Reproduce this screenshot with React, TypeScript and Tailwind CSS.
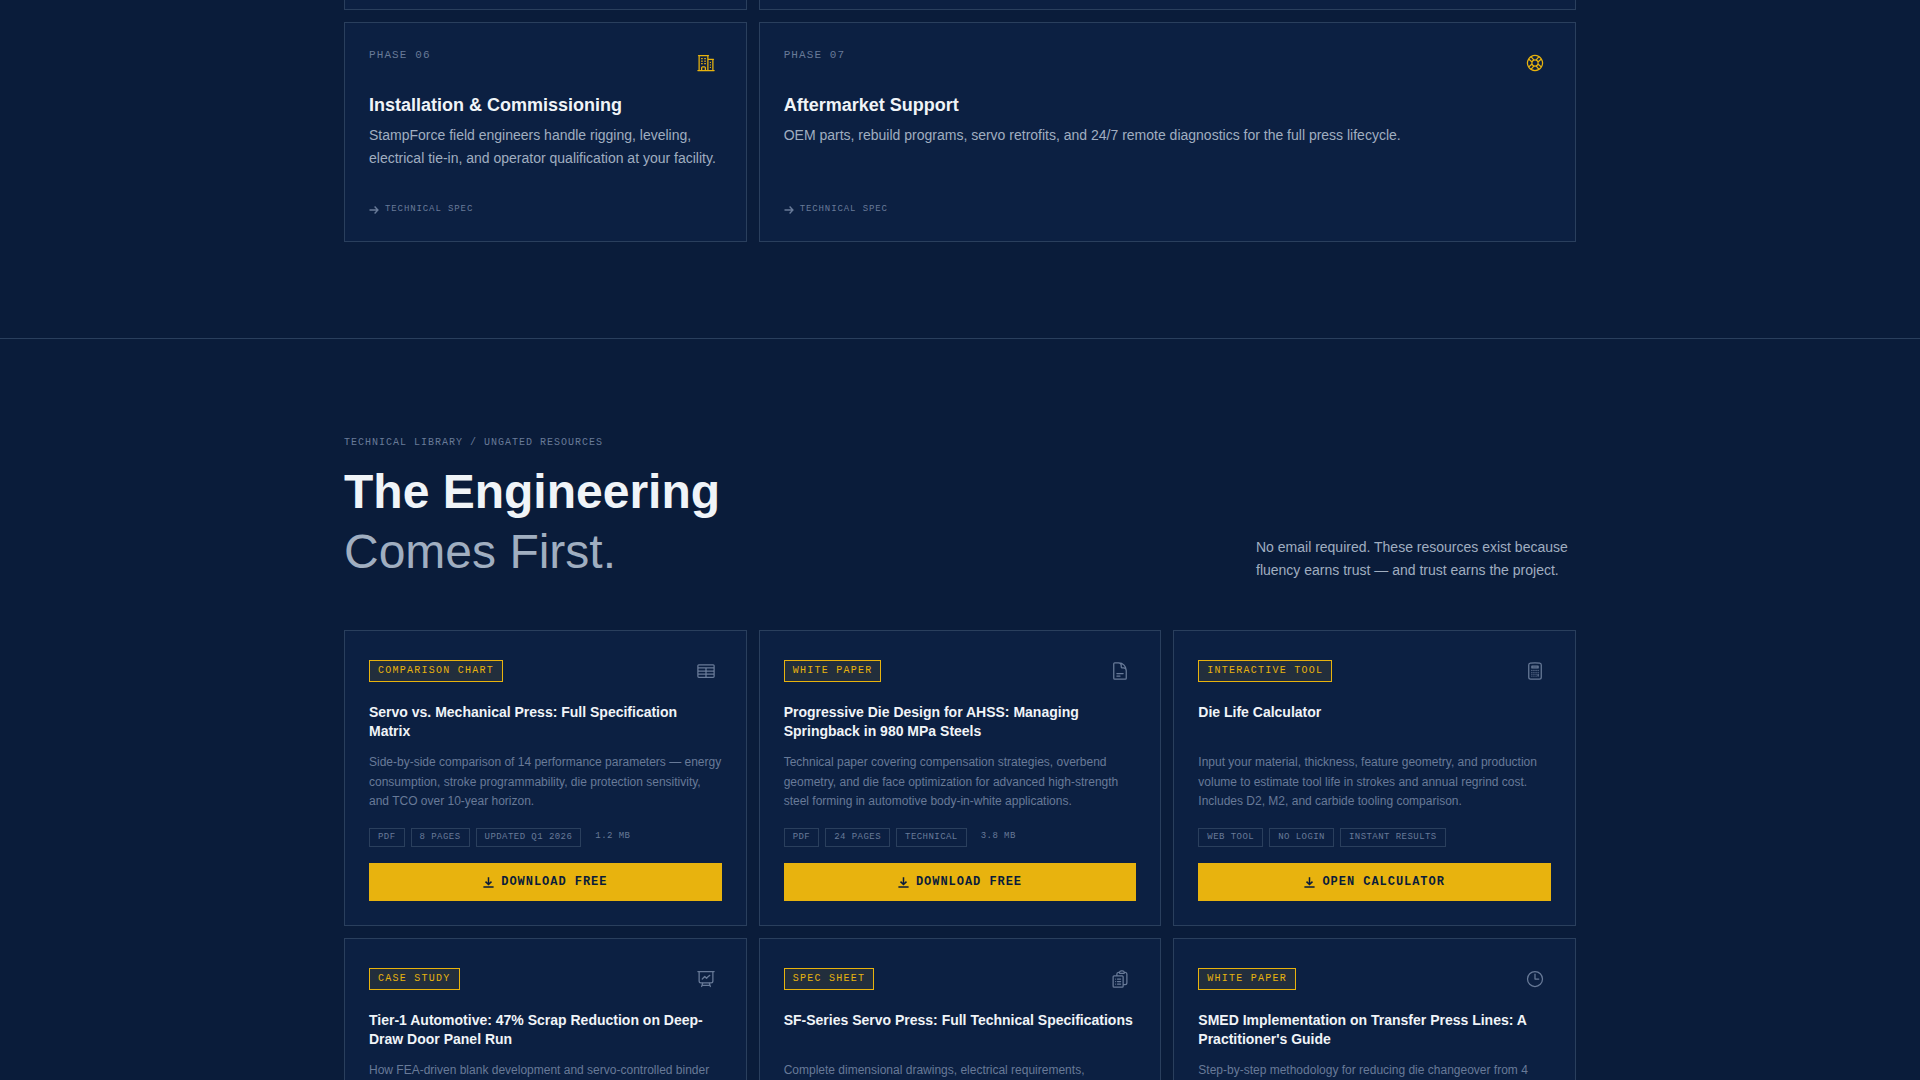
import type { ReactNode } from "react";
import type { IconType } from "react-icons";
import {
  HiOutlineBuildingOffice2,
  HiOutlineCalculator,
  HiOutlineClipboardDocumentList,
  HiOutlineClock,
  HiOutlineDocumentText,
  HiOutlineLifebuoy,
  HiOutlinePresentationChartLine,
  HiOutlineTableCells
} from "react-icons/hi2";

interface Phase {
  label: string;
  title: string;
  description: string;
  icon: IconType;
  wide?: boolean;
}

interface Resource {
  kind: string;
  title: string;
  description: string;
  icon: IconType;
  tags: string[];
  size?: string;
  action: string;
}

const phases: Phase[] = [
  {
    label: "PHASE 06",
    title: "Installation & Commissioning",
    description:
      "StampForce field engineers handle rigging, leveling, electrical tie-in, and operator qualification at your facility.",
    icon: HiOutlineBuildingOffice2
  },
  {
    label: "PHASE 07",
    title: "Aftermarket Support",
    description:
      "OEM parts, rebuild programs, servo retrofits, and 24/7 remote diagnostics for the full press lifecycle.",
    icon: HiOutlineLifebuoy,
    wide: true
  }
];

const resources: Resource[] = [
  {
    kind: "COMPARISON CHART",
    title: "Servo vs. Mechanical Press: Full Specification Matrix",
    description:
      "Side-by-side comparison of 14 performance parameters — energy consumption, stroke programmability, die protection sensitivity, and TCO over 10-year horizon.",
    icon: HiOutlineTableCells,
    tags: ["PDF", "8 PAGES", "UPDATED Q1 2026"],
    size: "1.2 MB",
    action: "DOWNLOAD FREE"
  },
  {
    kind: "WHITE PAPER",
    title: "Progressive Die Design for AHSS: Managing Springback in 980 MPa Steels",
    description:
      "Technical paper covering compensation strategies, overbend geometry, and die face optimization for advanced high-strength steel forming in automotive body-in-white applications.",
    icon: HiOutlineDocumentText,
    tags: ["PDF", "24 PAGES", "TECHNICAL"],
    size: "3.8 MB",
    action: "DOWNLOAD FREE"
  },
  {
    kind: "INTERACTIVE TOOL",
    title: "Die Life Calculator",
    description:
      "Input your material, thickness, feature geometry, and production volume to estimate tool life in strokes and annual regrind cost. Includes D2, M2, and carbide tooling comparison.",
    icon: HiOutlineCalculator,
    tags: ["WEB TOOL", "NO LOGIN", "INSTANT RESULTS"],
    action: "OPEN CALCULATOR"
  },
  {
    kind: "CASE STUDY",
    title: "Tier-1 Automotive: 47% Scrap Reduction on Deep-Draw Door Panel Run",
    description: "How FEA-driven blank development and servo-controlled binder",
    icon: HiOutlinePresentationChartLine,
    tags: [],
    action: "DOWNLOAD FREE"
  },
  {
    kind: "SPEC SHEET",
    title: "SF-Series Servo Press: Full Technical Specifications",
    description: "Complete dimensional drawings, electrical requirements,",
    icon: HiOutlineClipboardDocumentList,
    tags: [],
    action: "DOWNLOAD FREE"
  },
  {
    kind: "WHITE PAPER",
    title: "SMED Implementation on Transfer Press Lines: A Practitioner's Guide",
    description: "Step-by-step methodology for reducing die changeover from 4",
    icon: HiOutlineClock,
    tags: [],
    action: "DOWNLOAD FREE"
  }
];

export default function App() {
  return (
    <div className="h-screen overflow-hidden bg-[#0a1c3a] font-['Liberation_Sans',Arial,sans-serif] text-[#f0f4f8]">
      <section className="pb-24">
        <Container>
          <div className="grid grid-cols-3 gap-3">
            <div className="h-2.5 border border-t-0 border-[#2a3f5d] bg-[#0c2042]" />
            <div className="col-span-2 h-2.5 border border-t-0 border-[#2a3f5d] bg-[#0c2042]" />
            {phases.map((phase) => (
              <PhaseCard key={phase.label} phase={phase} />
            ))}
          </div>
        </Container>
      </section>

      <section className="border-t border-[#2a3f5d] py-24">
        <Container>
          <div className="mb-12 flex items-end justify-between">
            <div>
              <p className="mb-3 font-['Liberation_Mono',monospace] text-[10px] leading-[15px] tracking-widest text-[#687a98]">
                TECHNICAL LIBRARY / UNGATED RESOURCES
              </p>
              <h2 className="text-5xl leading-[60px] font-bold">
                The Engineering
                <br />
                <span className="font-normal text-[#a0aec0]">Comes First.</span>
              </h2>
            </div>
            <p className="max-w-xs text-sm leading-[23px] text-[#a0aec0]">
              No email required. These resources exist because fluency earns trust — and trust earns the project.
            </p>
          </div>

          <div className="grid grid-cols-3 gap-3">
            {resources.map((resource) => (
              <ResourceCard key={resource.title} resource={resource} />
            ))}
          </div>
        </Container>
      </section>
    </div>
  );
}

function Container({ children }: { children: ReactNode }) {
  return <div className="mx-auto max-w-7xl px-6">{children}</div>;
}

function PhaseCard({ phase }: { phase: Phase }) {
  const Icon = phase.icon;

  return (
    <article
      className={`flex min-h-[220px] flex-col border border-[#2a3f5d] bg-[#0c2042] p-6 ${phase.wide ? "col-span-2" : ""}`}
    >
      <div className="flex items-start justify-between">
        <span className="font-['Liberation_Mono',monospace] text-[11px] leading-4 tracking-widest text-[#687a98]">
          {phase.label}
        </span>
        <span className="flex size-8 items-center justify-center text-[#e8b30e]">
          <Icon className="size-5" />
        </span>
      </div>
      <h3 className="mt-[15px] text-lg leading-[22px] font-bold">{phase.title}</h3>
      <p className="mt-2 text-sm leading-[23px] text-[#a0aec0]">{phase.description}</p>
      <a
        href="#spec"
        className="mt-auto flex items-center gap-1.5 self-start font-['Liberation_Mono',monospace] text-[9px] leading-4 tracking-widest text-[#687a98]"
      >
        <ArrowRightIcon />
        TECHNICAL SPEC
      </a>
    </article>
  );
}

function ResourceCard({ resource }: { resource: Resource }) {
  const Icon = resource.icon;

  return (
    <article className="flex flex-col border border-[#2a3f5d] bg-[#0c2042] p-6">
      <div className="flex items-center justify-between">
        <span className="border border-[#e8b30e] bg-[#e8b30e]/10 px-2 py-0.5 font-['Liberation_Mono',monospace] text-[10px] leading-4 tracking-[0.125em] text-[#e8b30e]">
          {resource.kind}
        </span>
        <span className="flex size-8 items-center justify-center text-[#687a98]">
          <Icon className="size-5" />
        </span>
      </div>
      <h3 className="mt-4 min-h-10 text-sm leading-snug font-bold">{resource.title}</h3>
      <p className="mt-2.5 text-xs leading-relaxed text-[#687a98]">{resource.description}</p>
      <div className="mt-4 flex items-start gap-1.5 font-['Liberation_Mono',monospace] text-[9px] leading-[13px] tracking-wider text-[#687a98]">
        {resource.tags.map((tag) => (
          <span key={tag} className="border border-[#2a3f5d] px-2 py-0.5">
            {tag}
          </span>
        ))}
        {resource.size ? <span className="px-2 py-0.5">{resource.size}</span> : null}
      </div>
      <button
        type="button"
        className="mt-4 flex w-full items-center justify-center gap-1.5 bg-[#e8b30e] py-2.5 font-['Liberation_Mono',monospace] text-xs leading-[18px] font-bold tracking-[0.08em] text-[#0a1c3a]"
      >
        <DownloadIcon />
        {resource.action}
      </button>
    </article>
  );
}

function ArrowRightIcon() {
  return (
    <svg viewBox="0 0 10 10" className="size-2.5" fill="none" stroke="currentColor" strokeWidth="1.4" aria-hidden="true">
      <path d="M0.5 6h8.2M5.6 2.5l3.3 3.5L5.6 9.5" />
    </svg>
  );
}

function DownloadIcon() {
  return (
    <svg viewBox="0 0 12 12" className="size-3" fill="none" stroke="currentColor" strokeWidth="1.5" aria-hidden="true">
      <path d="M5.5 1.2v7.2M2.5 5.6l3 2.9 3-2.9M0.4 11.1h10.2" />
    </svg>
  );
}
